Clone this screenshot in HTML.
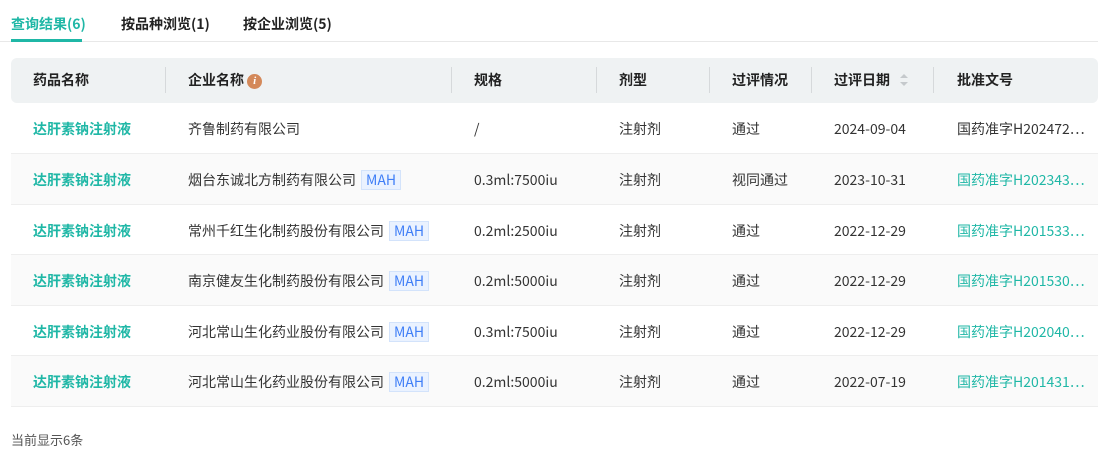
<!DOCTYPE html><html><head><meta charset="utf-8"><style>
*{margin:0;padding:0;box-sizing:border-box}
body{width:1098px;height:462px;background:#fff;font-family:"Noto Sans CJK SC","Liberation Sans",sans-serif;font-size:14px;color:#333;position:relative;overflow:hidden}
.tabs{position:absolute;top:0;left:0;width:1098px;height:42px;border-bottom:1px solid #e8e8e8}
.tab{position:absolute;top:13px;font-size:14px;line-height:22px;font-weight:bold;color:#222}
.tab.on{color:#1fb7a6}
.ul{position:absolute;left:11px;top:39px;width:71px;height:3px;background:#1fb7a6}
.hd{position:absolute;left:11px;top:58px;width:1087px;height:45px;background:#eff2f3;border-radius:6px}
.row{position:absolute;left:11px;width:1087px;height:50.5px;border-bottom:1px solid #eee}
.g{background:#fafafa}
.c{position:absolute;white-space:nowrap;line-height:22px}
.h{font-weight:bold;color:#222;top:11px}
.sep{position:absolute;top:9px;width:1px;height:26px;background:#d6d9db}
.r .c{top:15px}
.t{color:#1fb7a6}
.b{font-weight:bold;color:#1fb7a6}
.mah{display:inline-block;margin-left:5px;padding:0 4px;height:20px;line-height:19px;background:#eaf2ff;border:1px solid #d3e3fb;color:#3f7ef7;font-size:14px;vertical-align:0px}
</style></head><body>
<div class="tabs">
<div class="tab on" style="left:11px">查询结果(6)</div>
<div class="tab" style="left:121px">按品种浏览(1)</div>
<div class="tab" style="left:243px">按企业浏览(5)</div>
<div class="ul"></div></div>
<div class="hd">
<div class="c h" style="left:22px">药品名称</div><div class="sep" style="left:154px"></div>
<div class="c h" style="left:177px">企业名称 <span style="display:inline-block;width:15px;height:15px;border-radius:50%;background:#d4895a;color:#fff;font-size:11px;text-align:center;line-height:15px;font-style:italic;font-family:'Liberation Serif',serif;vertical-align:1px">i</span></div><div class="sep" style="left:440px"></div>
<div class="c h" style="left:463px">规格</div><div class="sep" style="left:585px"></div>
<div class="c h" style="left:608px">剂型</div><div class="sep" style="left:698px"></div>
<div class="c h" style="left:721px">过评情况</div><div class="sep" style="left:800px"></div>
<div class="c h" style="left:823px">过评日期 <svg width="10" height="16" style="vertical-align:-3px;margin-left:6px"><path d="M5 2L9 6H1z" fill="#c5c9cc"/><path d="M5 14L9 10H1z" fill="#c5c9cc"/></svg></div><div class="sep" style="left:922px"></div>
<div class="c h" style="left:946px">批准文号</div>
</div>
<div class="row r" style="top:103px"><div class="c b" style="left:22px">达肝素钠注射液</div><div class="c" style="left:177px">齐鲁制药有限公司</div><div class="c" style="left:463px">/</div><div class="c" style="left:608px">注射剂</div><div class="c" style="left:721px">通过</div><div class="c" style="left:823px">2024-09-04</div><div class="c" style="left:946px">国药准字H202472…</div></div>
<div class="row r g" style="top:154px"><div class="c b" style="left:22px">达肝素钠注射液</div><div class="c" style="left:177px">烟台东诚北方制药有限公司<span class="mah">MAH</span></div><div class="c" style="left:463px">0.3ml:7500iu</div><div class="c" style="left:608px">注射剂</div><div class="c" style="left:721px">视同通过</div><div class="c" style="left:823px">2023-10-31</div><div class="c t" style="left:946px">国药准字H202343…</div></div>
<div class="row r" style="top:204.5px"><div class="c b" style="left:22px">达肝素钠注射液</div><div class="c" style="left:177px">常州千红生化制药股份有限公司<span class="mah">MAH</span></div><div class="c" style="left:463px">0.2ml:2500iu</div><div class="c" style="left:608px">注射剂</div><div class="c" style="left:721px">通过</div><div class="c" style="left:823px">2022-12-29</div><div class="c t" style="left:946px">国药准字H201533…</div></div>
<div class="row r g" style="top:255px"><div class="c b" style="left:22px">达肝素钠注射液</div><div class="c" style="left:177px">南京健友生化制药股份有限公司<span class="mah">MAH</span></div><div class="c" style="left:463px">0.2ml:5000iu</div><div class="c" style="left:608px">注射剂</div><div class="c" style="left:721px">通过</div><div class="c" style="left:823px">2022-12-29</div><div class="c t" style="left:946px">国药准字H201530…</div></div>
<div class="row r" style="top:305.5px"><div class="c b" style="left:22px">达肝素钠注射液</div><div class="c" style="left:177px">河北常山生化药业股份有限公司<span class="mah">MAH</span></div><div class="c" style="left:463px">0.3ml:7500iu</div><div class="c" style="left:608px">注射剂</div><div class="c" style="left:721px">通过</div><div class="c" style="left:823px">2022-12-29</div><div class="c t" style="left:946px">国药准字H202040…</div></div>
<div class="row r g" style="top:356px"><div class="c b" style="left:22px">达肝素钠注射液</div><div class="c" style="left:177px">河北常山生化药业股份有限公司<span class="mah">MAH</span></div><div class="c" style="left:463px">0.2ml:5000iu</div><div class="c" style="left:608px">注射剂</div><div class="c" style="left:721px">通过</div><div class="c" style="left:823px">2022-07-19</div><div class="c t" style="left:946px">国药准字H201431…</div></div>
<div class="c" style="left:11px;top:429px;font-size:13px;color:#555">当前显示6条</div>
</body></html>
